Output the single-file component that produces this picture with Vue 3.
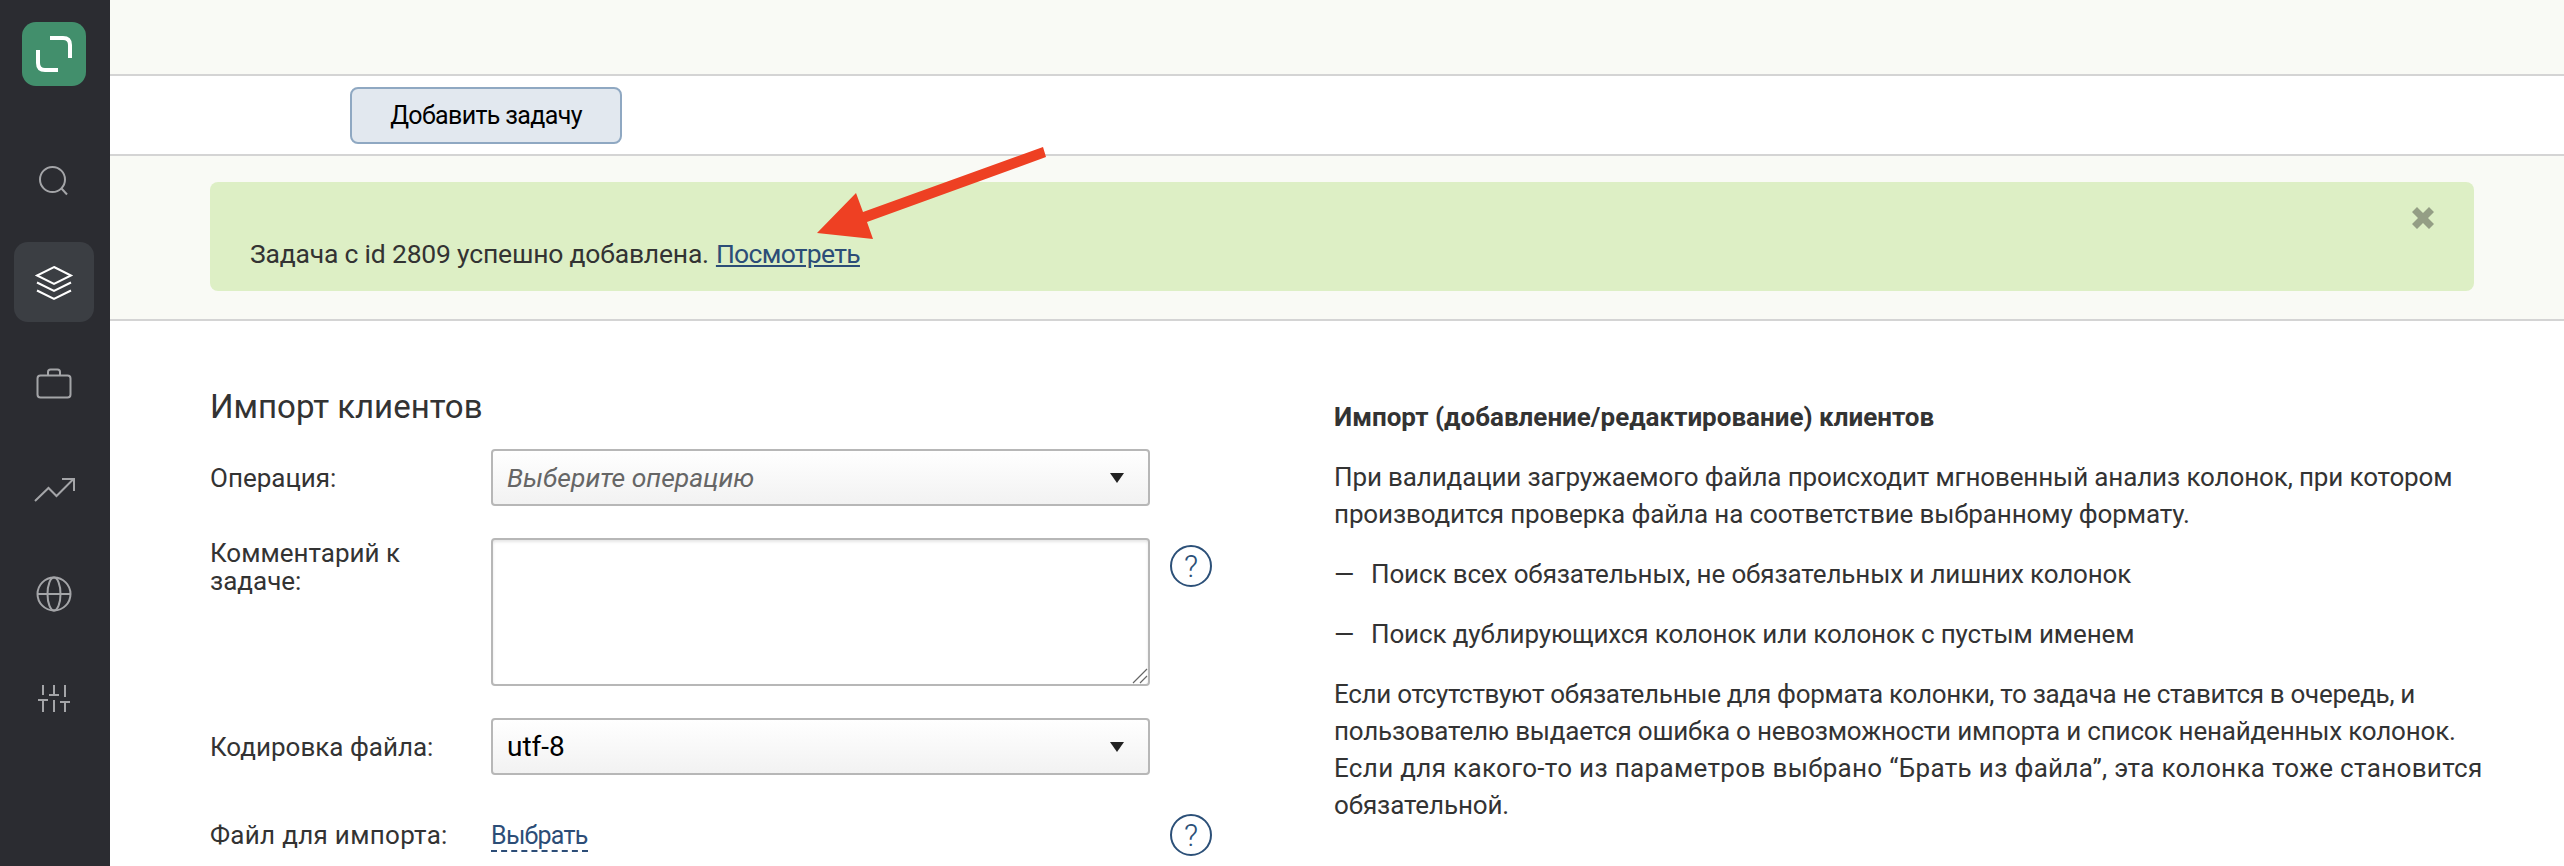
<script setup>
</script>

<template>
  <div class="app">
    <aside class="side">
      <div class="logo">
        <svg width="64" height="64" viewBox="0 0 64 64" fill="none" stroke="#fff" stroke-width="4">
          <path d="M28 16 H41 Q48 16 48 23 V36" />
          <path d="M16 28 V41 Q16 48 23 48 H36" />
        </svg>
      </div>
      <nav class="nav">
        <a class="item">
          <svg width="80" height="80" viewBox="0 0 80 80" fill="none" stroke="#a4a5a8" stroke-width="2">
            <circle cx="38.500" cy="39.500" r="12.500" />
            <path d="M47.500 48.500 L53 54.500" />
          </svg>
        </a>
        <a class="item active">
          <svg width="80" height="80" viewBox="0 0 80 80" fill="none" stroke="#fff" stroke-width="2">
            <path d="M40 25 L57 33.500 L40 42 L23 33.500 Z" />
            <path d="M23 40.500 L40 49 L57 40.500" />
            <path d="M23 48.500 L40 57 L57 48.500" />
          </svg>
        </a>
        <a class="item">
          <svg width="80" height="80" viewBox="0 0 80 80" fill="none" stroke="#a4a5a8" stroke-width="2">
            <rect x="23.500" y="31.500" width="33" height="22" rx="3" />
            <path d="M34 31 V28 Q34 25.500 36.500 25.500 H43.500 Q46 25.500 46 28 V31" />
          </svg>
        </a>
        <div class="lower">
          <a class="item">
            <svg width="80" height="80" viewBox="0 0 80 80" fill="none" stroke="#a4a5a8" stroke-width="2">
              <path d="M21 51 L34.500 38 L42.500 46 L59 29.500" />
              <path d="M48 29 H60 V41" />
            </svg>
          </a>
          <a class="item">
            <svg width="80" height="80" viewBox="0 0 80 80" fill="none" stroke="#a4a5a8" stroke-width="2">
              <circle cx="40" cy="40" r="16.500" />
              <ellipse cx="40" cy="40" rx="6.500" ry="16.500" />
              <path d="M23.500 40 H56.500" />
            </svg>
          </a>
          <a class="item">
            <svg width="80" height="80" viewBox="0 0 80 80" fill="none" stroke="#a4a5a8" stroke-width="2">
              <path d="M29 27 V37 M24 42 H34 M29 42 V54 M40 27 V37 M35 37 H45 M40 42 V54 M51 27 V39 M46 44 H56 M51 44 V54" />
            </svg>
          </a>
        </div>
      </nav>
    </aside>

    <main class="main">
      <div class="strip"></div>
      <div class="toolbar">
        <button class="btn">Добавить задачу</button>
      </div>
      <div class="notice-zone">
        <div class="notice">
          <span class="msg">Задача с id 2809 успешно добавлена.</span>
          <a class="link">Посмотреть</a>
          <svg class="close" width="22" height="22" viewBox="0 0 22 22">
            <path fill="#949e85" d="M5 0 L11 6 L17 0 L22 5 L16 11 L22 17 L17 22 L11 16 L5 22 L0 17 L6 11 L0 5 Z" />
          </svg>
        </div>
      </div>

      <div class="content">
        <section class="form">
          <h2>Импорт клиентов</h2>
          <div class="rows">
            <div class="row">
              <label>Операция:</label>
              <div class="select placeholder"><span>Выберите операцию</span><i class="caret"></i></div>
            </div>
            <div class="row">
              <label class="top">Комментарий к задаче:</label>
              <div class="area-wrap">
                <textarea class="area"></textarea>
                <svg class="grip" width="16" height="16" viewBox="0 0 16 16" fill="none" stroke="#666" stroke-width="1.200">
                  <path d="M15 1 L1 15 M15 8 L8 15" />
                </svg>
              </div>
              <span class="help top-help">?</span>
            </div>
            <div class="row">
              <label>Кодировка файла:</label>
              <div class="select value"><span>utf-8</span><i class="caret"></i></div>
            </div>
            <div class="row file">
              <label>Файл для импорта:</label>
              <div><a class="choose">Выбрать</a></div>
              <span class="help">?</span>
            </div>
          </div>
        </section>

        <section class="info">
          <h3>Импорт (добавление/редактирование) клиентов</h3>
          <p>При валидации загружаемого файла происходит мгновенный анализ колонок, при котором<br>производится проверка файла на соответствие выбранному формату.</p>
          <p class="dash"><span>—</span>Поиск всех обязательных, не обязательных и лишних колонок</p>
          <p class="dash"><span>—</span>Поиск дублирующихся колонок или колонок с пустым именем</p>
          <p><span class="tight">Если отсутствуют обязательные для формата колонки, то задача не ставится в очередь, и</span><br><span class="snug">пользователю выдается ошибка о невозможности импорта и список ненайденных колонок.</span><br><span class="wide">Если для какого-то из параметров выбрано “Брать из файла”, эта колонка тоже становится</span><br>обязательной.</p>
        </section>
      </div>

      <svg class="arrow" width="240" height="100" viewBox="810 145 240 100">
        <path fill="#ee4023" d="M817 233 L856 193 L863 212 L1043 147 L1046 157 L867 222 L873 239 Z" />
      </svg>
    </main>
  </div>
</template>

<style>
html, body { margin: 0; background: #fff; }
</style>

<style scoped>
.app {
  display: flex;
  height: 866px;
  overflow: hidden;
  font-family: Roboto, "Liberation Sans", sans-serif;
  color: #333;
  font-size: 26px;
}
.side {
  width: 110px;
  flex: none;
  background: #2b2c31;
  display: flex;
  flex-direction: column;
  align-items: center;
  padding-top: 22px;
  box-sizing: border-box;
}
.logo {
  width: 64px;
  height: 64px;
  border-radius: 14px;
  background: #428f6c;
  margin-left: -2px;
}
.logo svg, .item svg { display: block; }
.nav {
  margin-top: 54px;
  display: flex;
  flex-direction: column;
  gap: 22px;
  margin-left: -2px;
}
.lower {
  margin-top: 4px;
  display: flex;
  flex-direction: column;
  gap: 24px;
}
.item {
  width: 80px;
  height: 80px;
  border-radius: 14px;
  display: block;
}
.item.active { background: #3b3e43; }
.main {
  flex: 1;
  min-width: 0;
  position: relative;
}
.strip {
  height: 74px;
  background: #f9faf5;
  border-bottom: 2px solid #d4d4d4;
}
.toolbar {
  height: 78px;
  border-bottom: 2px solid #d4d4d4;
  padding-left: 240px;
  display: flex;
  align-items: center;
}
.btn {
  width: 272px;
  height: 57px;
  background: #e2e8ef;
  border: 2px solid #8fa8c2;
  border-radius: 8px;
  font: inherit;
  font-size: 25px;
  color: #000;
  letter-spacing: -0.65px;
  padding: 0;
}
.notice-zone {
  background: #f9faf5;
  padding: 26px 90px 28px 100px;
  border-bottom: 2px solid #d4d4d4;
}
.notice {
  position: relative;
  height: 109px;
  box-sizing: border-box;
  background: #ddefc5;
  border-radius: 8px;
  padding: 56px 40px 0;
  line-height: 32px;
  display: flex;
  gap: 7px;
  font-size: 26.500px;
}
.msg { letter-spacing: -0.2px; }
.link {
  color: #2c4d77;
  text-decoration: underline;
  letter-spacing: -0.7px;
}
.close {
  position: absolute;
  right: 40px;
  top: 25px;
}
.content {
  display: flex;
  padding-left: 100px;
}
.form {
  width: 1002px;
  padding-top: 66px;
  flex: none;
}
h2 {
  margin: 0 0 22px;
  font-size: 33px;
  line-height: 40px;
  font-weight: 400;
}
.rows {
  display: flex;
  flex-direction: column;
  gap: 32px;
}
.row {
  display: grid;
  grid-template-columns: 281px 659px 62px;
  align-items: center;
}
.row label.top {
  align-self: start;
  padding-top: 1px;
  line-height: 28px;
  padding-right: 60px;
}
.select {
  height: 57px;
  box-sizing: border-box;
  border: 2px solid #b7b7b7;
  border-radius: 4px;
  background: linear-gradient(#fff, #f2f2f2);
  padding: 0 24px 0 14px;
  display: flex;
  align-items: center;
  justify-content: space-between;
  color: #000;
}
.placeholder {
  color: #666;
  font-style: italic;
  font-size: 26.500px;
}
.value { font-size: 28px; }
.caret {
  width: 0;
  height: 0;
  border-left: 7px solid transparent;
  border-right: 7px solid transparent;
  border-top: 10px solid #222;
}
.area-wrap {
  position: relative;
  height: 148px;
}
.area {
  width: 100%;
  height: 100%;
  box-sizing: border-box;
  border: 2px solid #b7b7b7;
  border-radius: 4px;
  background: #fff;
  margin: 0;
  box-shadow: inset 0 2px 3px #e6e6e6;
  outline: none;
  display: block;
  resize: none;
}
.grip {
  position: absolute;
  right: 2px;
  bottom: 2px;
}
.help {
  width: 42px;
  height: 42px;
  box-sizing: border-box;
  border: 2px solid #2c5078;
  border-radius: 50%;
  color: #2c5078;
  display: flex;
  align-items: center;
  justify-content: center;
  font-size: 31px;
  font-weight: 300;
  margin-left: 20px;
}
.top-help {
  align-self: start;
  margin-top: 7px;
}
.file { height: 56px; }
.file label { letter-spacing: 0.3px; }
.choose {
  color: #2c4d77;
  font-size: 25px;
  letter-spacing: -0.7px;
  border-bottom: 2px dashed #2c4d77;
}
.info {
  margin-left: 122px;
  padding-top: 78px;
  line-height: 37px;
  letter-spacing: -0.13px;
}
h3 {
  margin: 0 0 23px;
  font-size: 26px;
  line-height: 37px;
  font-weight: 700;
  letter-spacing: 0;
}
p { margin: 0 0 23px; }
.tight { letter-spacing: -0.3px; }
.snug { letter-spacing: -0.19px; }
.wide { letter-spacing: 0.33px; }
.dash { display: flex; }
.dash span { width: 37px; flex: none; }
.arrow {
  position: absolute;
  left: 700px;
  top: 145px;
}
</style>
